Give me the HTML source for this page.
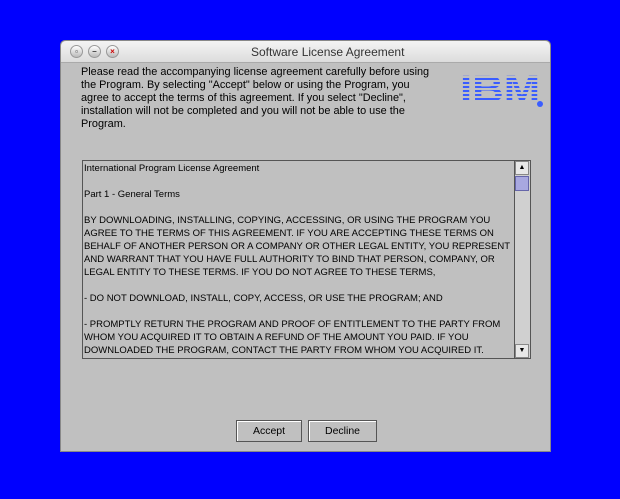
<!DOCTYPE html>
<html><head><style>
body{margin:0;width:620px;height:499px;background:#0000ff;position:relative;overflow:hidden;font-family:"Liberation Sans",sans-serif;}
.win{position:absolute;left:60px;top:40px;width:491px;height:412px;background:#c0c0c0;border-radius:5px 5px 0 0;border:1px solid #888;box-sizing:border-box;}
.title{position:absolute;left:0;top:0;width:100%;height:21px;background:linear-gradient(#f4f4f4,#dcdcdc);border-radius:5px 5px 0 0;border-bottom:1px solid #aaa;}
.title span{position:absolute;left:190px;top:4px;font-size:12px;color:#333;}
.btnc{position:absolute;top:4px;width:13px;height:13px;border-radius:50%;background:linear-gradient(#fff,#bbb);border:1px solid #999;box-sizing:border-box;font-size:8px;font-weight:bold;text-align:center;line-height:11px;color:#333;}
.hdr{position:absolute;left:20px;top:25px;font-size:10.9px;line-height:13px;color:#000;white-space:nowrap;}
.ibm{position:absolute;left:399px;top:31px;font:bold 38px "Liberation Sans",sans-serif;color:#3a5dff;line-height:36px;transform:scaleX(1.15);transform-origin:left;}
.ibm:after{content:"";position:absolute;left:0;right:0;top:0;bottom:0;background:repeating-linear-gradient(#c0c0c0 0 2px,transparent 2px 4px);}
.reg{position:absolute;left:476px;top:60px;width:6px;height:6px;border-radius:50%;background:#3a5dff;}
.ta{position:absolute;left:21px;top:119px;width:449px;height:199px;border:1px solid #555;box-sizing:border-box;overflow:hidden;}
.ta pre{margin:0;padding:1px 0 0 1px;font:9.5px/13px "Liberation Sans",sans-serif;color:#000;}
.sb{position:absolute;right:0;top:0;width:15px;height:197px;background:#d0d0d0;border-left:1px solid #555;}
.sb .a{position:absolute;left:0;width:14px;height:14px;background:#e8e8e8;border:1px solid #888;box-sizing:border-box;font-size:7px;text-align:center;line-height:12px;}
.thumb{position:absolute;left:0;top:15px;width:14px;height:15px;background:#a8a8e0;border:1px solid #6666aa;box-sizing:border-box;}
.b{position:absolute;top:379px;height:22px;border:1px solid #555;box-shadow:inset 1px 1px #fff;background:#c0c0c0;font-size:10.5px;text-align:center;line-height:20px;box-sizing:border-box;}
</style></head><body>
<div class="win">
<div class="title"><div class="btnc" style="left:9px">▫</div><div class="btnc" style="left:27px">–</div><div class="btnc" style="left:45px;color:#c00">×</div><span>Software License Agreement</span></div>
<div class="hdr">Please read the accompanying license agreement carefully before using<br>the Program. By selecting "Accept" below or using the Program, you<br>agree to accept the terms of this agreement. If you select "Decline",<br>installation will not be completed and you will not be able to use the<br>Program.</div>
<div class="ibm">IBM</div><div class="reg"></div>
<div class="ta"><pre>International Program License Agreement

Part 1 - General Terms

BY DOWNLOADING, INSTALLING, COPYING, ACCESSING, OR USING THE PROGRAM YOU
AGREE TO THE TERMS OF THIS AGREEMENT. IF YOU ARE ACCEPTING THESE TERMS ON
BEHALF OF ANOTHER PERSON OR A COMPANY OR OTHER LEGAL ENTITY, YOU REPRESENT
AND WARRANT THAT YOU HAVE FULL AUTHORITY TO BIND THAT PERSON, COMPANY, OR
LEGAL ENTITY TO THESE TERMS. IF YOU DO NOT AGREE TO THESE TERMS,

- DO NOT DOWNLOAD, INSTALL, COPY, ACCESS, OR USE THE PROGRAM; AND

- PROMPTLY RETURN THE PROGRAM AND PROOF OF ENTITLEMENT TO THE PARTY FROM
WHOM YOU ACQUIRED IT TO OBTAIN A REFUND OF THE AMOUNT YOU PAID. IF YOU
DOWNLOADED THE PROGRAM, CONTACT THE PARTY FROM WHOM YOU ACQUIRED IT.</pre>
<div class="sb"><div class="a" style="top:0">▲</div><div class="thumb"></div><div class="a" style="bottom:0">▼</div></div></div>
<div class="b" style="left:175px;width:66px">Accept</div>
<div class="b" style="left:247px;width:69px">Decline</div>
</div>
</body></html>
